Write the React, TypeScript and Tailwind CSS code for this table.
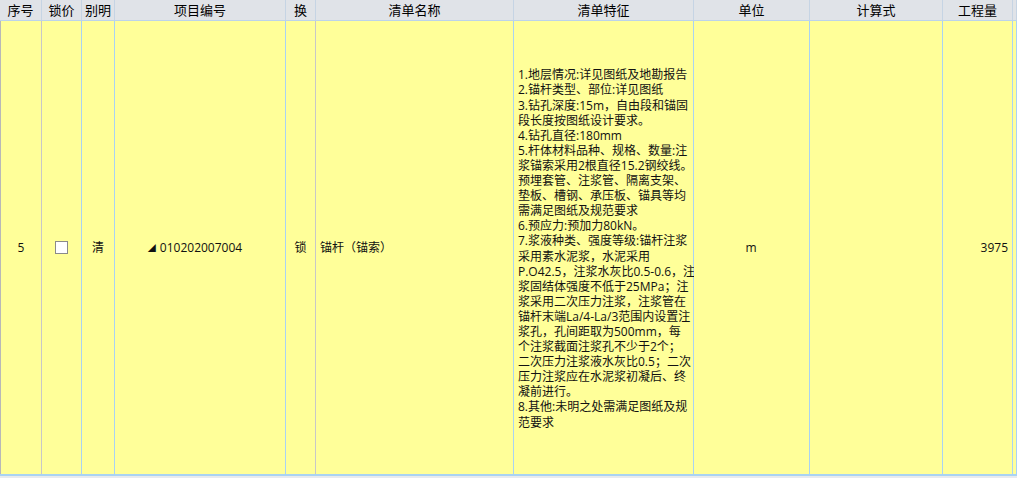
const FONT = "font-['Segoe_UI','Open_Sans','Noto_Sans_CJK_SC',sans-serif]";

const columns = [
  { key: "seq", title: "序号" },
  { key: "lock", title: "锁价" },
  { key: "alias", title: "别明" },
  { key: "code", title: "项目编号" },
  { key: "swap", title: "换" },
  { key: "name", title: "清单名称" },
  { key: "feature", title: "清单特征" },
  { key: "unit", title: "单位" },
  { key: "formula", title: "计算式" },
  { key: "qty", title: "工程量" },
  { key: "pad", title: "" },
];

const featureLines = [
  "1.地层情况:详见图纸及地勘报告",
  "2.锚杆类型、部位:详见图纸",
  "3.钻孔深度:15m，自由段和锚固",
  "段长度按图纸设计要求。",
  "4.钻孔直径:180mm",
  "5.杆体材料品种、规格、数量:注",
  "浆锚索采用2根直径15.2钢绞线。",
  "预埋套管、注浆管、隔离支架、",
  "垫板、槽钢、承压板、锚具等均",
  "需满足图纸及规范要求",
  "6.预应力:预加力80kN。",
  "7.浆液种类、强度等级:锚杆注浆",
  "采用素水泥浆，水泥采用",
  "P.O42.5，注浆水灰比0.5-0.6，注",
  "浆固结体强度不低于25MPa；注",
  "浆采用二次压力注浆，注浆管在",
  "锚杆末端La/4-La/3范围内设置注",
  "浆孔，孔间距取为500mm，每",
  "个注浆截面注浆孔不少于2个；",
  "二次压力注浆液水灰比0.5；二次",
  "压力注浆应在水泥浆初凝后、终",
  "凝前进行。",
  "8.其他:未明之处需满足图纸及规",
  "范要求",
];

const grid =
  "grid grid-cols-[42px_40px_33px_171px_30px_198px_180px_116px_133px_70px_4px]";

function Cell({
  children,
  className = "",
}: {
  children?: React.ReactNode;
  className?: string;
}) {
  return (
    <div className={`flex items-center border-r border-[#a9d3f3] bg-[#ffff99] ${className}`}>
      {children}
    </div>
  );
}

export default function App() {
  return (
    <div className={`h-[478px] w-[1017px] overflow-hidden bg-white text-[#111] ${FONT}`}>
      {/* header */}
      <div className={`${grid} h-[21px] border-b border-[#bcd3ea] bg-[#e0e3e8]`}>
        {columns.map((c) => (
          <div
            key={c.key}
            className="flex items-center justify-center border-r border-[#c6d4e4] text-[13px] leading-none text-black"
          >
            {c.title}
          </div>
        ))}
      </div>

      {/* row */}
      <div className={`${grid} h-[453px] text-[12px]`}>
        <Cell className="justify-center border-l border-l-[#b8b8b8] border-r-[#c8c8c8]">5</Cell>
        <Cell className="justify-center">
          <span className="block h-[13px] w-[13px] border border-[#8a8a8a] bg-white" />
        </Cell>
        <Cell className="justify-center">清</Cell>
        <Cell className="justify-center pr-[10px]">
          <span className="mr-[4px] text-[8px] leading-none">◢</span>
          <span>010202007004</span>
        </Cell>
        <Cell className="justify-center border-r-[#c8c8c8]">锁</Cell>
        <Cell className="pl-[4px]">锚杆（锚索）</Cell>
        <Cell className="pl-[4px]">
          <div className="pt-[2px] leading-[15.1px]">
            {featureLines.map((l, i) => (
              <div key={i} className="whitespace-nowrap">
                {l}
              </div>
            ))}
          </div>
        </Cell>
        <Cell className="justify-center pr-[1px]">m</Cell>
        <Cell className="bg-[#a2d5fb]" />
        <Cell className="justify-end pr-[4px]">3975</Cell>
        <Cell />
      </div>

      {/* bottom edge */}
      <div className="h-[2px] bg-[#a9d3f3]" />
      <div className="h-[2px] bg-[#e8ebef]" />
    </div>
  );
}
